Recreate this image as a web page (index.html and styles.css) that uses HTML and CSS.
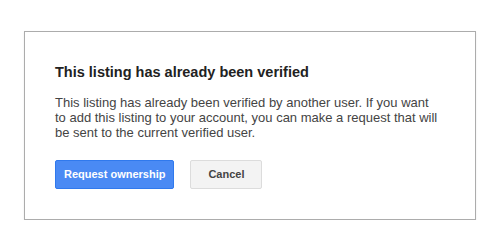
FILE: index.html
```html
<!DOCTYPE html>
<html>
<head>
<meta charset="utf-8">
<link rel="stylesheet" href="styles.css">
</head>
<body>
<div class="page">
  <div class="dialog">
    <div class="title">This listing has already been verified</div>
    <div class="content">This listing has already been verified by another user. If you want to&nbsp;add this listing to your account, you can make a request that will be sent to the current verified user.</div>
    <div class="buttons">
      <button class="btn btn-primary">Request ownership</button>
      <button class="btn btn-default">Cancel</button>
    </div>
  </div>
</div>
</body>
</html>
```

FILE: styles.css
```css
html, body {
  margin: 0;
  padding: 0;
  background: #fff;
}
.page {
  padding: 31px 0 0 24px;
  font-family: "Liberation Sans", Arial, sans-serif;
}
.dialog {
  box-sizing: border-box;
  width: 452px;
  height: 189px;
  border: 1px solid #acacac;
  box-shadow: 0 1px 2px rgba(0,0,0,0.08);
  background: #fff;
  padding: 30px 30px 0 30px;
}
.title {
  font-size: 14.5px;
  font-weight: bold;
  line-height: 20px;
  color: #222;
}
.content {
  margin-top: 13px;
  font-size: 13px;
  line-height: 15px;
  color: #444;
  width: 390px;
}
.buttons {
  margin-top: 20px;
  display: flex;
  gap: 16px;
}
.btn {
  box-sizing: border-box;
  min-width: 72px;
  height: 29px;
  padding: 0 8px;
  border-radius: 2px;
  font-family: "Liberation Sans", Arial, sans-serif;
  font-size: 11px;
  font-weight: bold;
  line-height: 27px;
  text-align: center;
  margin: 0;
}
.btn-primary {
  background: #4a8af4;
  border: 1px solid #3079ed;
  color: #fff;
}
.btn-default {
  background: #f3f3f3;
  border: 1px solid #dcdcdc;
  color: #444;
}
```
